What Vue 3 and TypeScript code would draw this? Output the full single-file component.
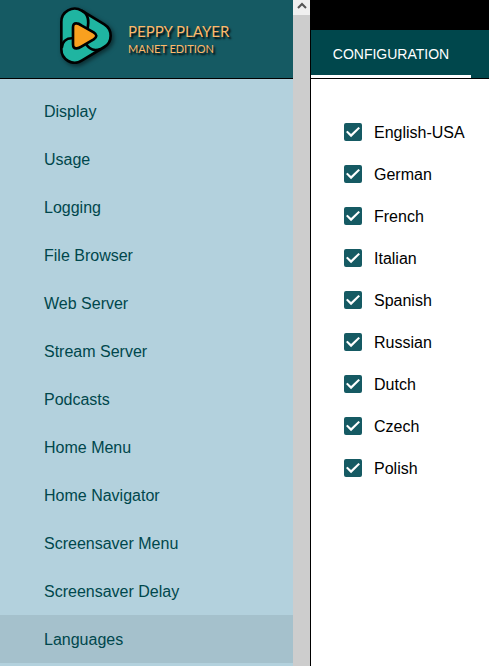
<script setup lang="ts">
import { ref } from 'vue'

interface Language {
  id: string
  label: string
  enabled: boolean
}

const sections: string[] = [
  'Display',
  'Usage',
  'Logging',
  'File Browser',
  'Web Server',
  'Stream Server',
  'Podcasts',
  'Home Menu',
  'Home Navigator',
  'Screensaver Menu',
  'Screensaver Delay',
  'Languages',
]

const selected = ref('Languages')

const languages = ref<Language[]>(
  ['English-USA', 'German', 'French', 'Italian', 'Spanish', 'Russian', 'Dutch', 'Czech', 'Polish'].map(
    (label) => ({ id: 'lang-' + label.toLowerCase(), label, enabled: true }),
  ),
)
</script>

<template>
  <div class="app">
    <aside class="sidebar">
      <header class="brand">
        <svg class="logo" viewBox="27 18 168 180" aria-hidden="true">
          <path
            class="ring"
            d="M34 67 A40 40 0 0 1 95 32 L163 73 A40 40 0 0 1 163 141 L95 182 A40 40 0 0 1 34 148 Z"
          />
          <path class="seam" d="M95 32 C112 40 119 58 112 88" />
          <path class="seam" d="M35 144 C37 124 50 113 70 115" />
          <path class="seam" d="M106 128 C116 148 134 154 152 147" />
          <path
            class="play"
            d="M69 82 Q69 69 80 70 Q86 70 94 76 L131 97 Q147 107 131 118 L94 140 Q86 145 80 145 Q69 146 69 133 Z"
          />
        </svg>
        <div class="titles">
          <span class="title">PEPPY PLAYER</span>
          <span class="edition">MANET EDITION</span>
        </div>
      </header>
      <nav class="menu">
        <button
          v-for="section in sections"
          :key="section"
          type="button"
          class="menu-item"
          :class="{ active: section === selected }"
          @click="selected = section"
        >
          {{ section }}
        </button>
      </nav>
    </aside>

    <div class="scrollbar" aria-hidden="true">
      <div class="scroll-up">
        <svg class="chevron" viewBox="0 0 10 8"><path d="M1 6 L5 2 L9 6" /></svg>
      </div>
    </div>

    <main class="content">
      <div class="top-strip"></div>
      <div class="tabs" role="tablist">
        <button type="button" class="tab" role="tab" aria-selected="true">CONFIGURATION</button>
      </div>
      <form class="options">
        <div v-for="language in languages" :key="language.id" class="option">
          <input :id="language.id" v-model="language.enabled" type="checkbox" class="check" />
          <label :for="language.id">{{ language.label }}</label>
        </div>
      </form>
    </main>
  </div>
</template>

<style>
body {
  overflow: hidden;
}
</style>

<style scoped>
.app {
  display: grid;
  grid-template-columns: minmax(0, 293px) 17px minmax(178px, 1fr);
  min-height: 100vh;
  font-family: 'Liberation Sans', Arial, sans-serif;
  font-size: 16px;
  color: #000;
  background: #fff;
}

button {
  font-family: inherit;
  border: 0;
  cursor: pointer;
}

.sidebar {
  background: #b3d1dd;
}

.brand {
  display: flex;
  align-items: flex-start;
  gap: 13px;
  box-sizing: border-box;
  height: 79px;
  padding: 6px 0 0 59px;
  background: #155a63;
  border-bottom: 1px solid #000;
}

.logo {
  flex: none;
  width: 56px;
  height: 60px;
  overflow: visible;
  filter: drop-shadow(2px 2px 2px rgba(0, 0, 0, 0.5));
}

.logo path {
  stroke: #000;
  stroke-width: 8;
  stroke-linejoin: round;
}

.ring {
  fill: #1fb5a1;
}

.logo .seam {
  fill: none;
}

.logo .play {
  fill: #f9a01f;
}

.titles {
  display: flex;
  flex-direction: column;
  padding-top: 15px;
  font-family: Lato, sans-serif;
  color: #fdb96a;
  text-shadow: 2px 2px 2px #000;
  white-space: nowrap;
}

.title {
  font-size: 15px;
  line-height: 20px;
}

.edition {
  font-size: 11px;
  line-height: 16px;
}

.menu {
  display: flex;
  flex-direction: column;
  padding: 8px 0 0;
}

.menu-item {
  height: 48px;
  padding: 2px 16px 0 44px;
  font-size: 16px;
  text-align: left;
  color: #00474c;
  background: transparent;
}

.menu-item.active {
  background: #a5c1cc;
}

.scrollbar {
  background: #cdcdcd;
}

.scroll-up {
  display: flex;
  justify-content: center;
  height: 15px;
  background: #f0f0f0;
}

.chevron {
  width: 10px;
  height: 8px;
  margin-top: 2px;
}

.chevron path {
  fill: none;
  stroke: #555;
  stroke-width: 2;
}

.content {
  border-left: 1px solid #000;
}

.top-strip {
  height: 30px;
  background: #000;
}

.tabs {
  display: flex;
  height: 48px;
  background: #00474c;
  border-bottom: 1px solid #000;
}

.tab {
  width: 160px;
  padding: 3px 0 0;
  font-size: 14px;
  color: #fff;
  background: transparent;
  border-bottom: 3px solid #fff;
}

.options {
  padding: 32px 0 0 33px;
}

.option {
  display: flex;
  align-items: center;
  gap: 12px;
  height: 42px;
}

.option label {
  padding-top: 2px;
}

.check {
  flex: none;
  width: 18px;
  height: 18px;
  margin: 0;
  appearance: none;
  border: 2px solid #155a63;
  border-radius: 2px;
}

.check:checked {
  display: grid;
  place-items: center;
  background: #155a63;
}

.check:checked::before {
  content: '';
  width: 14px;
  height: 11px;
  background: #fff;
  clip-path: polygon(0 50%, 11% 38%, 36% 69%, 89% 4%, 100% 16%, 36% 98%);
}
</style>
